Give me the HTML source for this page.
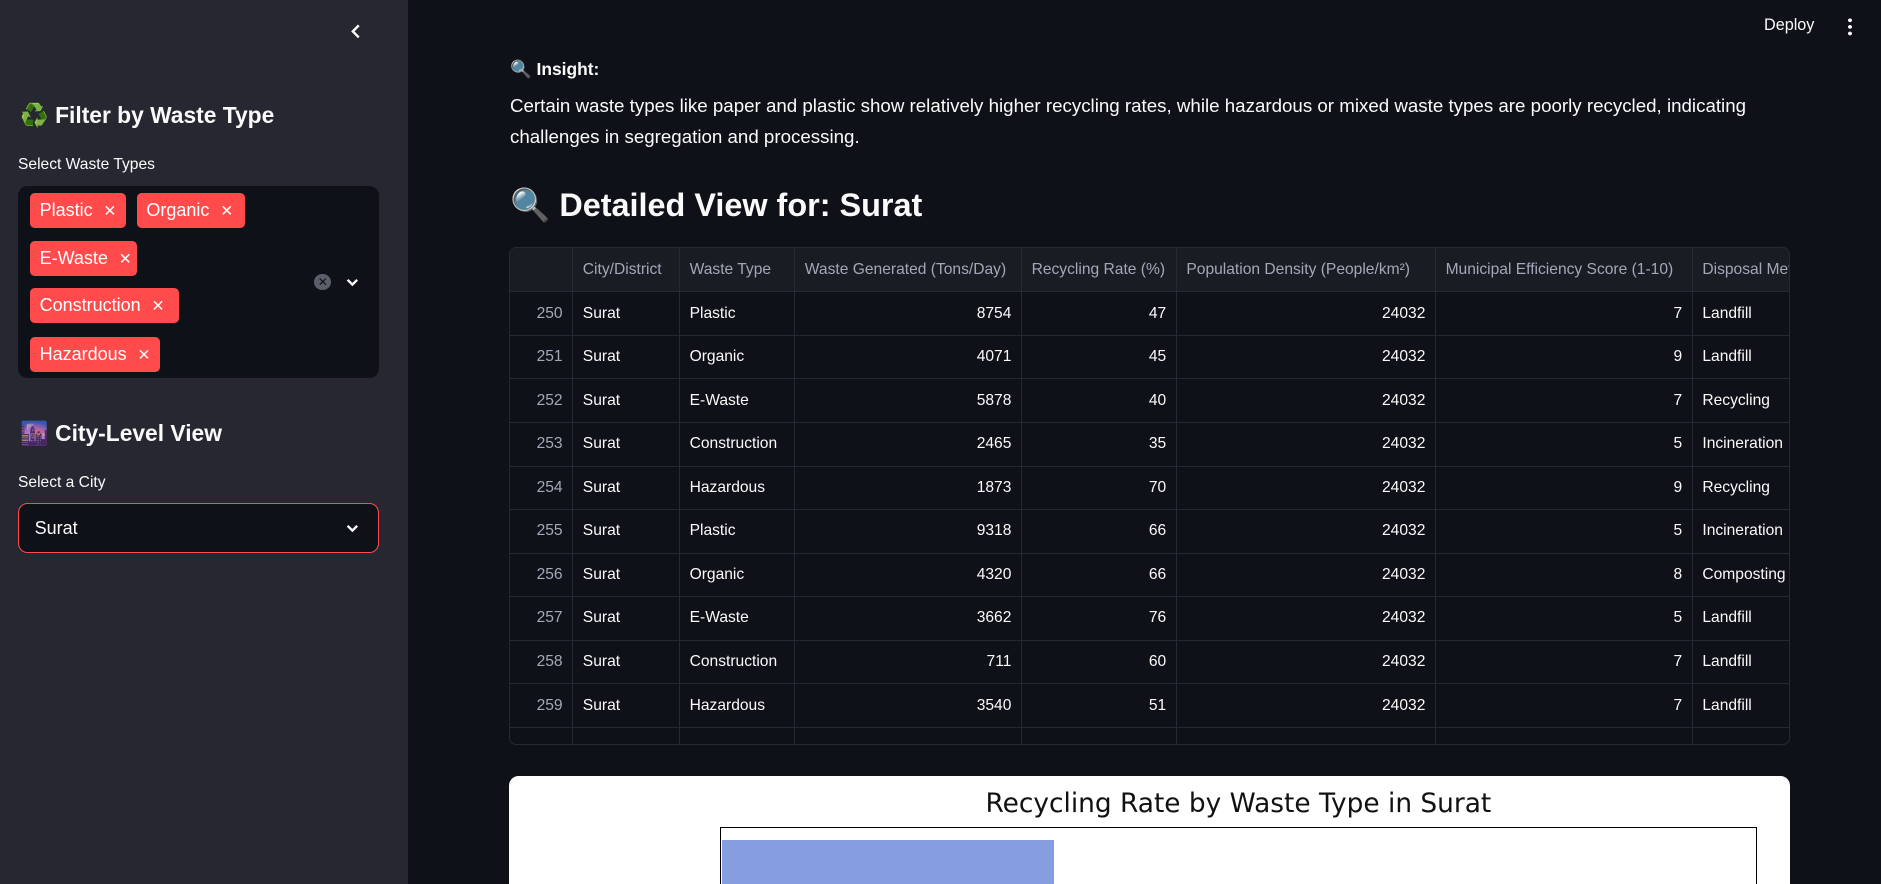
<!DOCTYPE html>
<html><head><meta charset="utf-8"><style>
*{box-sizing:border-box;margin:0;padding:0}
html,body{width:1881px;height:884px;overflow:hidden;background:#0e1117}
#root{zoom:1.2;width:1568px;height:737px;position:relative;font-family:"Liberation Sans","Noto Sans CJK JP",sans-serif;color:#fafafa;background:#0e1117;overflow:hidden}
.side{position:absolute;left:0;top:0;width:340px;height:737px;background:#262730}
.abs{position:absolute}
h2{font-size:19px;font-weight:bold;position:absolute;white-space:nowrap}
.lbl{font-size:13px;position:absolute}
.tag{position:absolute;height:29px;background:#ff4b4b;border-radius:4px;font-size:15px;line-height:29px;padding-left:8px;color:#fff;white-space:nowrap}
.tag span{font-size:13px;margin-left:9px}
table{border-collapse:collapse;font-size:13px;table-layout:fixed}
td,th{border:1px solid #262933;height:36.3px;padding:0 8px;white-space:nowrap;overflow:hidden}
th{font-weight:normal;color:#a3a8b8;background:#1a1c24;height:37px;text-align:left}
td.r{text-align:right}
td.i{color:#a3a8b8;text-align:right}
</style></head><body><div id="root">
<div class="side">
  <svg class="abs" style="left:290px;top:19px" width="14" height="14" viewBox="0 0 14 14"><path d="M9 2 L4 7 L9 12" stroke="#fafafa" stroke-width="2" fill="none"/></svg>
  <h2 style="left:17px;top:85px">♻️ Filter by Waste Type</h2>
  <div class="lbl" style="left:15px;top:130px">Select Waste Types</div>
  <div class="abs" style="left:15px;top:155px;width:301px;height:160px;background:#0e1117;border-radius:8px"></div>
  <div class="tag" style="left:25px;top:161px;width:80px">Plastic<span>✕</span></div>
  <div class="tag" style="left:114px;top:161px;width:90px">Organic<span>✕</span></div>
  <div class="tag" style="left:25px;top:201px;width:89px">E-Waste<span>✕</span></div>
  <div class="tag" style="left:25px;top:240px;width:124px">Construction<span>✕</span></div>
  <div class="tag" style="left:25px;top:281px;width:108px">Hazardous<span>✕</span></div>
  <div class="abs" style="left:262px;top:228px;width:14px;height:14px;border-radius:7px;background:#5b5e6b;color:#111;font-size:10px;line-height:14px;text-align:center">✕</div>
  <svg class="abs" style="left:287px;top:229px" width="14" height="12" viewBox="0 0 14 12"><path d="M3 4 L7 8 L11 4" stroke="#fafafa" stroke-width="2" fill="none"/></svg>
  <h2 style="left:17px;top:350px">🌆 City-Level View</h2>
  <div class="lbl" style="left:15px;top:395px">Select a City</div>
  <div class="abs" style="left:15px;top:419px;width:301px;height:42px;background:#0e1117;border:1px solid #ff4b4b;border-radius:8px;font-size:15px;line-height:40px;padding-left:13px">Surat</div>
  <svg class="abs" style="left:287px;top:434px" width="14" height="12" viewBox="0 0 14 12"><path d="M3 4 L7 8 L11 4" stroke="#fafafa" stroke-width="2" fill="none"/></svg>
</div>
<div class="abs" style="left:1470px;top:13px;font-size:13.5px">Deploy</div>
<div class="abs" style="left:1540px;top:14px;width:3px;height:16px;background:radial-gradient(circle,#fafafa 1.4px,transparent 1.6px) 0 0/3px 5.5px"></div>
<div class="abs" style="left:425px;top:49px;font-size:14.5px;font-weight:bold">🔍 Insight:</div>
<div class="abs" style="left:425px;top:75px;width:1070px;font-size:15.6px;line-height:26px">Certain waste types like paper and plastic show relatively higher recycling rates, while hazardous or mixed waste types are poorly recycled, indicating challenges in segregation and processing.</div>
<div class="abs" style="left:425px;top:155px;font-size:27px;font-weight:bold">🔍 Detailed View for: Surat</div>
<div class="abs" style="left:424px;top:206px;width:1068px;height:415px;border:1px solid #262933;border-radius:6px;overflow:hidden">
<table style="width:1120px;margin:-1px">
<colgroup><col style="width:53px"><col style="width:89px"><col style="width:96px"><col style="width:189px"><col style="width:129px"><col style="width:216px"><col style="width:214px"><col style="width:134px"></colgroup>
<tr><th></th><th>City/District</th><th>Waste Type</th><th>Waste Generated (Tons/Day)</th><th>Recycling Rate (%)</th><th>Population Density (People/km²)</th><th>Municipal Efficiency Score (1-10)</th><th>Disposal Method</th></tr>
<tr><td class="i">250</td><td>Surat</td><td>Plastic</td><td class="r">8754</td><td class="r">47</td><td class="r">24032</td><td class="r">7</td><td>Landfill</td></tr>
<tr><td class="i">251</td><td>Surat</td><td>Organic</td><td class="r">4071</td><td class="r">45</td><td class="r">24032</td><td class="r">9</td><td>Landfill</td></tr>
<tr><td class="i">252</td><td>Surat</td><td>E-Waste</td><td class="r">5878</td><td class="r">40</td><td class="r">24032</td><td class="r">7</td><td>Recycling</td></tr>
<tr><td class="i">253</td><td>Surat</td><td>Construction</td><td class="r">2465</td><td class="r">35</td><td class="r">24032</td><td class="r">5</td><td>Incineration</td></tr>
<tr><td class="i">254</td><td>Surat</td><td>Hazardous</td><td class="r">1873</td><td class="r">70</td><td class="r">24032</td><td class="r">9</td><td>Recycling</td></tr>
<tr><td class="i">255</td><td>Surat</td><td>Plastic</td><td class="r">9318</td><td class="r">66</td><td class="r">24032</td><td class="r">5</td><td>Incineration</td></tr>
<tr><td class="i">256</td><td>Surat</td><td>Organic</td><td class="r">4320</td><td class="r">66</td><td class="r">24032</td><td class="r">8</td><td>Composting</td></tr>
<tr><td class="i">257</td><td>Surat</td><td>E-Waste</td><td class="r">3662</td><td class="r">76</td><td class="r">24032</td><td class="r">5</td><td>Landfill</td></tr>
<tr><td class="i">258</td><td>Surat</td><td>Construction</td><td class="r">711</td><td class="r">60</td><td class="r">24032</td><td class="r">7</td><td>Landfill</td></tr>
<tr><td class="i">259</td><td>Surat</td><td>Hazardous</td><td class="r">3540</td><td class="r">51</td><td class="r">24032</td><td class="r">7</td><td>Landfill</td></tr>
<tr><td class="i"></td><td></td><td></td><td></td><td></td><td></td><td></td><td></td></tr>
</table></div>
<div class="abs" style="left:424px;top:647px;width:1068px;height:100px;background:#fff;border-radius:8px">
  <div class="abs" style="left:0;top:10px;width:1068px;text-align:center;padding-left:148px;font-size:22px;color:#111;font-family:'DejaVu Sans',sans-serif">Recycling Rate by Waste Type in Surat</div>
  <div class="abs" style="left:176px;top:42px;width:864px;height:80px;border:1.5px solid #000"></div>
  <div class="abs" style="left:178px;top:53px;width:276px;height:60px;background:#869ee0"></div>
</div>
</div></body></html>
